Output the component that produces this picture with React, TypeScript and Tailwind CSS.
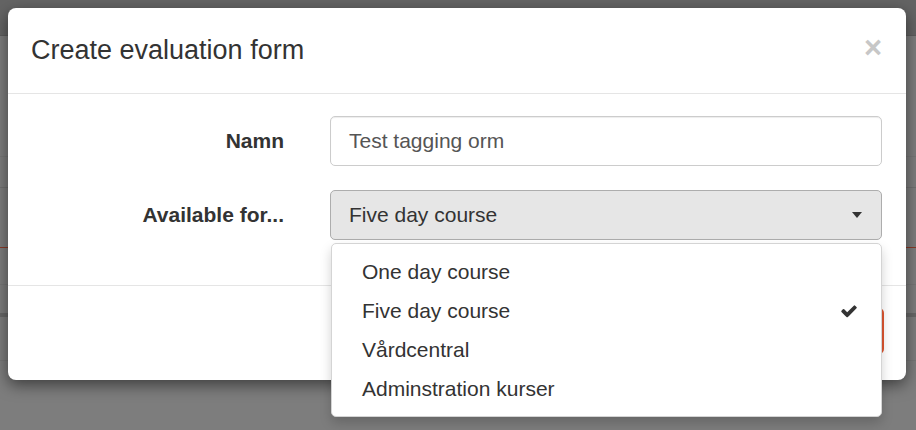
import React from 'react';

const options = ['One day course', 'Five day course', 'Vårdcentral', 'Adminstration kurser'];

const CheckIcon = () => (
  <svg viewBox="0 0 1792 1792" className="h-[18px] w-[18px] fill-[#333]">
    <path d="M1671 566q0 40-28 68l-724 724-136 136q-28 28-68 28t-68-28l-136-136-362-362q-28-28-28-68t28-68l136-136q28-28 68-28t68 28l294 295 656-657q28-28 68-28t68 28l136 136q28 28 28 68z" />
  </svg>
);

export default function App() {
  const selected = 'Five day course';

  return (
    <div className="relative h-[430px] w-[916px] overflow-hidden bg-[#7d7d7d] font-['Liberation_Sans',Arial,sans-serif]">
      {/* dimmed page behind the modal */}
      <div className="flex flex-col">
        <div className="h-[36px] border-b border-[#5c5c5c] bg-[#646464]" />
        <div className="h-[121px] border-b border-[#767676]" />
        <div className="h-[31px] border-b border-[#707070]" />
        <div className="h-[60px] border-b border-[#8a3b28]" />
        <div className="h-[37px] border-b border-[#767676]" />
        <div className="h-[32px] border-b-[4px] border-[#686868]" />
        <div className="h-[44px] border-b border-[#767676]" />
      </div>

      {/* modal */}
      <div className="absolute left-[8px] top-[8px] flex h-[372px] w-[898px] flex-col rounded-[8px] bg-white shadow-[0_5px_15px_rgba(0,0,0,0.5)]">
        <div className="flex h-[86px] items-center justify-between border-b border-[#e5e5e5] pl-[23px] pr-[24px]">
          <h4 className="text-[27px] leading-none text-[#333]">Create evaluation form</h4>
          <span className="-mt-[6px] text-[31px] font-bold leading-none text-[#c7c7c7]">×</span>
        </div>

        <div className="flex flex-col gap-[24px] pt-[22px] pb-[45px]">
          <div className="flex items-center">
            <label className="w-[276px] text-right text-[21px] font-bold text-[#333]">Namn</label>
            <div className="ml-[46px] flex h-[50px] w-[552px] items-center rounded-[5px] border border-[#ccc] px-[18px] text-[21px] text-[#555] shadow-[inset_0_1px_1px_rgba(0,0,0,0.075)]">
              Test tagging orm
            </div>
          </div>
          <div className="flex items-center">
            <label className="w-[276px] text-right text-[21px] font-bold text-[#333]">Available for...</label>
            <div className="ml-[46px] flex h-[50px] w-[552px] items-center justify-between rounded-[5px] border border-[#adadad] bg-[#e6e6e6] pl-[18px] pr-[19px] text-[21px] text-[#333]">
              <span>{selected}</span>
              <span className="h-0 w-0 border-x-[5px] border-t-[6px] border-x-transparent border-t-[#333]" />
            </div>
          </div>
        </div>

        <div className="flex flex-1 items-center justify-end border-t border-[#e5e5e5] pr-[22px]">
          <div className="mt-[-4px] h-[46px] w-[110px] rounded-[5px] bg-[#dd5530]" />
        </div>
      </div>

      {/* open select menu */}
      <div className="absolute left-[331px] top-[243px] w-[551px] rounded-[5px] border border-[#d4d4d4] bg-white py-[8px] shadow-[0_6px_12px_rgba(0,0,0,0.175)]">
        {options.map(opt => (
          <div key={opt} className="flex h-[39px] items-center justify-between pl-[30px] pr-[23px] text-[21px] text-[#333]">
            <span>{opt}</span>
            {opt === selected && <CheckIcon />}
          </div>
        ))}
      </div>
    </div>
  );
}
